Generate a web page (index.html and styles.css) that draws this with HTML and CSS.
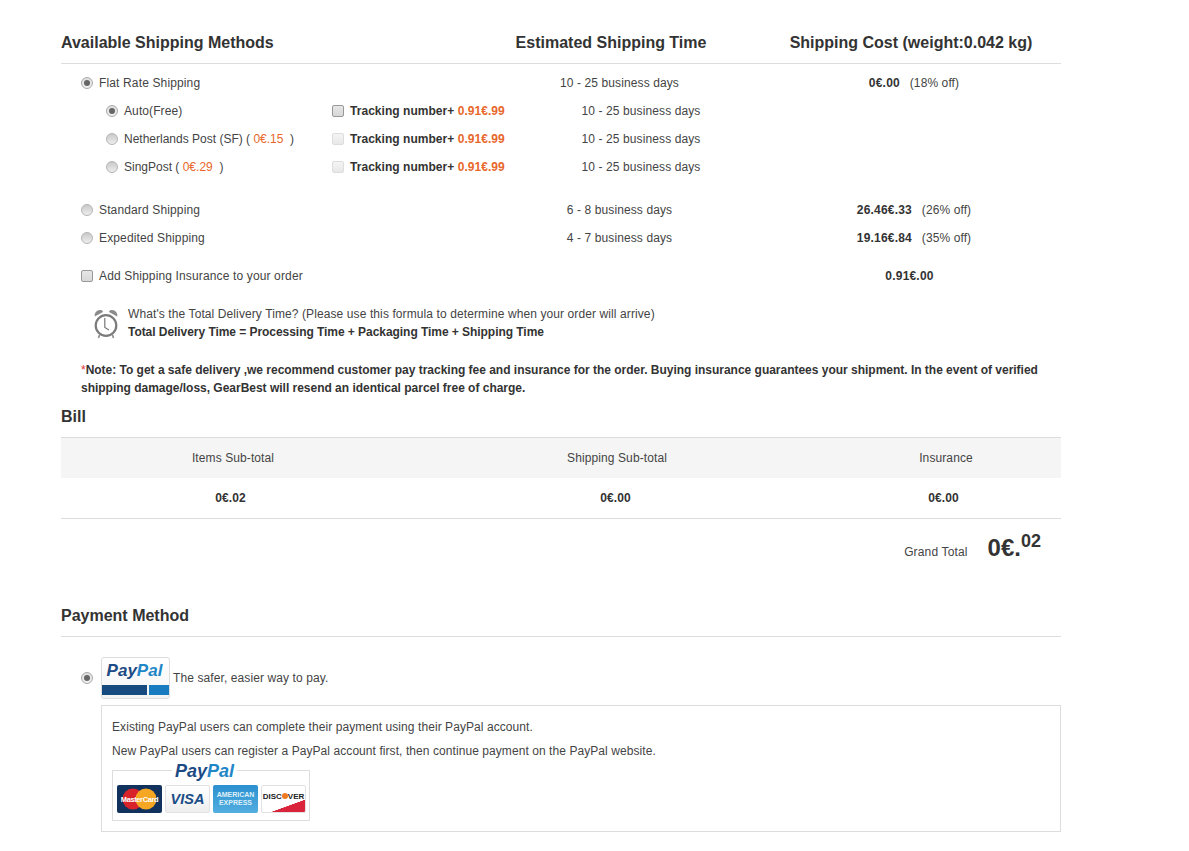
FILE: index.html
```html
<!DOCTYPE html>
<html lang="en">
<head>
<meta charset="utf-8">
<title>Shipping and payment</title>
<link rel="stylesheet" href="styles.css">
</head>
<body>
<main class="page">
  <header class="ship-head">
    <h2 class="h-method">Available Shipping Methods</h2>
    <h2 class="h-time">Estimated Shipping Time</h2>
    <h2 class="h-cost">Shipping Cost (weight:0.042 kg)</h2>
  </header>

  <section class="methods">
    <div class="row">
      <label class="opt"><span class="radio on"></span>Flat Rate Shipping</label>
      <span class="time">10 - 25 business days</span>
      <span class="cost"><b>0€.00</b>&nbsp; (18% off)</span>
    </div>
    <div class="row sub">
      <label class="opt opt-sub"><span class="radio on"></span>Auto(Free)</label>
      <label class="track"><span class="check strong"></span><b>Tracking number+ <em>0.91€.99</em></b></label>
      <span class="time-sub">10 - 25 business days</span>
    </div>
    <div class="row sub">
      <label class="opt opt-sub opt-tight"><span class="radio"></span>Netherlands Post (SF) (<i> 0€.15 </i>&nbsp;)</label>
      <label class="track"><span class="check"></span><b>Tracking number+ <em>0.91€.99</em></b></label>
      <span class="time-sub">10 - 25 business days</span>
    </div>
    <div class="row sub last-sub">
      <label class="opt opt-sub opt-tight"><span class="radio"></span>SingPost (<i> 0€.29 </i>&nbsp;)</label>
      <label class="track"><span class="check"></span><b>Tracking number+ <em>0.91€.99</em></b></label>
      <span class="time-sub">10 - 25 business days</span>
    </div>
    <div class="row">
      <label class="opt"><span class="radio"></span>Standard Shipping</label>
      <span class="time">6 - 8 business days</span>
      <span class="cost"><b>26.46€.33</b>&nbsp; (26% off)</span>
    </div>
    <div class="row">
      <label class="opt"><span class="radio"></span>Expedited Shipping</label>
      <span class="time">4 - 7 business days</span>
      <span class="cost"><b>19.16€.84</b>&nbsp; (35% off)</span>
    </div>
    <div class="row insurance">
      <label class="opt"><span class="check strong"></span>Add Shipping Insurance to your order</label>
      <span class="time"></span>
      <span class="cost cost-ins"><b>0.91€.00</b></span>
    </div>
  </section>

  <section class="formula">
    <svg class="clock" width="24" height="30" viewBox="0 0 24 30" aria-hidden="true">
      <path d="M0.8 7.5C0 3.5 3.2 0.3 7 1C8 1.3 8.8 2 9 3Z" fill="#8b8b8b"/>
      <path d="M23.2 7.5C24 3.5 20.8 0.3 17 1C16 1.3 15.2 2 15 3Z" fill="#8b8b8b"/>
      <circle cx="12" cy="16.5" r="10.3" fill="#fff" stroke="#7b7b7b" stroke-width="2.2"/>
      <path d="M10.8 9V18.5L15 21" fill="none" stroke="#777" stroke-width="1.2"/>
      <path d="M5.5 26L4.5 29M18.5 26L19.5 29" stroke="#8b8b8b" stroke-width="1.6"/>
    </svg>
    <div class="formula-text">
      <p>What's the Total Delivery Time? (Please use this formula to determine when your order will arrive)</p>
      <p class="formula-sum"><b>Total Delivery Time = Processing Time + Packaging Time + Shipping Time</b></p>
    </div>
  </section>

  <p class="note"><span class="star">*</span>Note: To get a safe delivery ,we recommend customer pay tracking fee and insurance for the order. Buying insurance guarantees your shipment. In the event of verified shipping damage/loss, GearBest will resend an identical parcel free of charge.</p>

  <h2 class="bill-title">Bill</h2>
  <section class="bill">
    <div class="bill-row bill-head">
      <span class="c1">Items Sub-total</span><span>Shipping Sub-total</span><span>Insurance</span>
    </div>
    <div class="bill-row bill-body">
      <b class="c1b">0€.02</b><b class="c2b">0€.00</b><b class="c3b">0€.00</b>
    </div>
  </section>
  <div class="grand"><span class="grand-label">Grand Total</span><strong class="grand-num">0€.<sup>02</sup></strong></div>

  <h2 class="pay-title">Payment Method</h2>
  <div class="pay-opt">
    <span class="radio on"></span>
    <div class="pp-logo">
      <span class="pp-word"><span class="pp-a">Pay</span><span class="pp-b">Pal</span></span>
      <span class="pp-bars"><span class="pp-dark"></span><span class="pp-light"></span></span>
    </div>
    <span class="pay-tag">The safer, easier way to pay.</span>
  </div>
  <div class="pay-box">
    <p>Existing PayPal users can complete their payment using their PayPal account.</p>
    <p>New PayPal users can register a PayPal account first, then continue payment on the PayPal website.</p>
    <div class="cards">
      <span class="cards-word"><span class="pp-a">Pay</span><span class="pp-b">Pal</span></span>
      <div class="card mc">
        <svg width="45" height="28" viewBox="0 0 45 28" aria-hidden="true">
          <circle cx="16" cy="14" r="10.5" fill="#d8232a"/>
          <circle cx="29" cy="14" r="10.5" fill="#f5a623"/>
          <text x="22.5" y="16.5" text-anchor="middle" class="mc-text">MasterCard</text>
        </svg>
      </div>
      <div class="card visa"><span>VISA</span></div>
      <div class="card amex"><span>AMERICAN<br>EXPRESS</span></div>
      <div class="card disc"><span>DISC<i></i>VER</span></div>
    </div>
  </div>
</main>
</body>
</html>
```
FILE: styles.css
```css
* { box-sizing: border-box; }
html, body { margin: 0; padding: 0; background: #fff; }
body {
  font-family: "Liberation Sans", Arial, sans-serif;
  font-size: 12px;
  letter-spacing: 0.1px;
  color: #444;
  height: 851px;
  overflow: hidden;
}
.page { width: 1000px; margin-left: 61px; padding-top: 21px; }
h2 { margin: 0; font-size: 16px; font-weight: bold; color: #333; letter-spacing: 0; }
p { margin: 0; }
b { color: #333; letter-spacing: 0.04px; }

.ship-head {
  display: grid;
  grid-template-columns: 400px 300px 300px;
  height: 43px;
  border-bottom: 1px solid #ddd;
}
.ship-head h2 { line-height: 43px; }
.h-time { text-align: center; }
.h-cost { text-align: center; }

.methods { padding-top: 5px; }
.row {
  display: grid;
  grid-template-columns: 399px 319px 282px;
  height: 28px;
  align-items: center;
}
.row.sub { grid-template-columns: 270px 190px 240px 300px; }
.row.last-sub { margin-bottom: 15px; }
.row.insurance { margin-top: 10px; }
.opt { display: flex; align-items: center; padding-left: 20px; white-space: pre; letter-spacing: 0.14px; }
.opt-sub { padding-left: 45px; letter-spacing: 0.1px; }
.opt-tight { letter-spacing: 0; }
.opt i { font-style: normal; color: #e8672c; white-space: pre; }
.time { text-align: center; }
.time-sub { text-align: center; }
.cost { text-align: center; padding-right: 12px; }
.cost b { margin-right: 3px; letter-spacing: 0.2px; }
.cost-ins { padding-right: 18px; }
.track { display: flex; align-items: center; white-space: pre; padding-left: 1px; }
.track em { font-style: normal; color: #e8672c; }

.radio {
  width: 12px; height: 12px; border-radius: 50%;
  background: linear-gradient(#c9c9c9, #eee);
  border: 1px solid #b4b4b4;
  margin-right: 6px;
  flex: none;
  display: inline-flex; align-items: center; justify-content: center;
}
.radio.on { border-color: #aaa; background: linear-gradient(#ddd, #f1f1f1); }
.radio.on::after { content: ""; width: 6px; height: 6px; border-radius: 50%; background: #666; }
.check {
  width: 12px; height: 12px; border-radius: 2px;
  background: linear-gradient(#f4f4f4, #e8e8e8);
  border: 1px solid #ddd;
  margin-right: 6px;
  flex: none;
}
.check.strong { border-color: #999; background: linear-gradient(#e6e6e6, #d8d8d8); }

.formula { display: flex; align-items: flex-start; padding-left: 33px; margin-top: 15px; }
.clock { flex: none; margin-top: 4px; margin-right: 10px; }
.formula-text p { line-height: 18px; }
.formula-sum b { letter-spacing: -0.05px; }

.note { margin-top: 20px; padding-left: 20px; line-height: 18px; font-weight: bold; color: #333; letter-spacing: -0.015px; }
.star { color: #d33; font-weight: normal; }

.bill-title { margin-top: 9px; line-height: 22px; height: 20px; }
.bill { margin-top: 11px; border-top: 1px solid #ddd; border-bottom: 1px solid #ddd; }
.bill-row { display: grid; grid-template-columns: 342px 428px 230px; height: 40px; align-items: center; text-align: center; }
.bill-head { background: #f5f5f5; }
.c1 { padding-left: 2px; }
.c1b, .c2b { padding-right: 3px; }
.c3b { padding-right: 5px; }
.bill-body b { letter-spacing: 0.1px; }
.grand {
  display: flex; justify-content: flex-end; align-items: flex-start;
  height: 60px; padding-right: 20px; padding-top: 15px;
}
.grand-label { margin-top: 11px; margin-right: 20px; letter-spacing: 0.15px; }
.grand-num { font-size: 24px; line-height: 28px; color: #333; letter-spacing: 0; }
.grand-num sup { font-size: 18px; line-height: 0; vertical-align: 9px; }

.pay-title { margin-top: 27px; line-height: 20px; padding-bottom: 10px; border-bottom: 1px solid #ddd; height: 31px; }
.pay-opt { display: flex; align-items: center; margin-top: 20px; padding-left: 20px; height: 42px; }
.pay-opt .radio { margin-right: 8px; }
.pp-logo {
  width: 69px; height: 42px; border: 1px solid #ddd; border-radius: 3px;
  margin-right: 3px; overflow: hidden; display: flex; flex-direction: column;
  background: linear-gradient(#fff, #f4f4f4);
}
.pp-word { display: block; height: 27px; line-height: 25px; text-align: center; font-size: 17px; font-weight: bold; font-style: italic; letter-spacing: 0; margin-left: -2px; white-space: nowrap; }
.pp-a { color: #1c4a84; }
.pp-b { color: #1f86c7; }
.pp-bars { display: flex; gap: 2px; height: 10px; }
.pp-dark { width: 45px; background: #174a7f; }
.pp-light { flex: 1; background: #1a7cc0; }
.pay-box {
  margin: 6px 0 0 40px; width: 960px; height: 127px;
  border: 1px solid #ddd; padding: 9px 10px 0;
  letter-spacing: 0.07px;
}
.pay-box p { line-height: 24px; }
.cards {
  position: relative; display: flex; gap: 3px; align-items: center;
  width: 198px; height: 51px; margin-top: 7px;
  border: 1px solid #ddd; padding: 6px 4px 0;
}
.cards-word {
  position: absolute; top: -8px; left: 59px; padding: 0 3px; background: #fff;
  font-size: 18px; line-height: 16px; font-weight: bold; font-style: italic; letter-spacing: 0;
}
.card { width: 45px; height: 28px; border-radius: 2px; flex: none; overflow: hidden; display: flex; align-items: center; justify-content: center; letter-spacing: 0; }
.mc { background: #12325e; }
.mc-text { font-size: 7.5px; font-weight: bold; fill: #fff; letter-spacing: -0.4px; }
.visa { background: linear-gradient(#fff, #eee); border: 1px solid #e2e2e2; color: #1a4c86; font-weight: bold; font-style: italic; font-size: 14.5px; }
.amex { background: linear-gradient(#2b90cf, #53aee0); color: #dff0fa; font-size: 7px; line-height: 8px; text-align: center; font-weight: bold; }
.disc { background: linear-gradient(160deg, #fff 70%, #d9243c 71%); border: 1px solid #e2e2e2; color: #222; font-size: 8px; font-weight: bold; padding-bottom: 5px; }
.disc i { display: inline-block; width: 6px; height: 6px; border-radius: 50%; background: #f07a20; }
```
